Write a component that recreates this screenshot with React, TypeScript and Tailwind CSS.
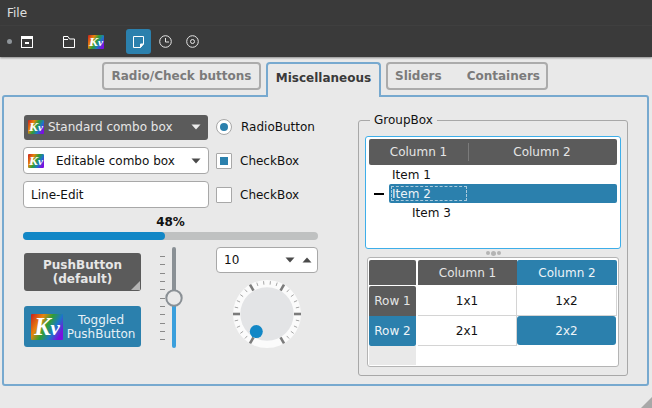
import React from "react";

function Kv({ w, h, cls = "" }: { w: number; h: number; cls?: string }) {
  return (
    <span
      className={`inline-flex items-baseline justify-center shrink-0 rounded-[1px] bg-[linear-gradient(120deg,#c81e1e_0%,#e8840c_28%,#2f9e35_48%,#1a78c8_68%,#7a0fe0_88%)] font-['Liberation_Serif',serif] italic font-bold text-white ${cls}`}
      style={{ width: w, height: h, fontSize: h * 0.95, lineHeight: `${h}px` }}
    >
      K<span style={{ fontSize: h * 0.8 }}>v</span>
    </span>
  );
}

function Caret({ up = false, cls = "fill-[#4a4a4a]" }: { up?: boolean; cls?: string }) {
  return (
    <svg width="10" height="6" viewBox="0 0 10 6" className={cls}>
      <path d={up ? "M5 0.5 L9.5 5.5 L0.5 5.5 Z" : "M0.5 0.5 L9.5 0.5 L5 5.5 Z"} />
    </svg>
  );
}

function Toolbar() {
  return (
    <div className="flex h-[31px] items-center bg-[#3a3a3a] pl-[7px] shadow-[0_1px_2px_#8a8a8a]">
      <span className="h-[5px] w-[5px] rounded-full bg-[#8f959a]" />
      <svg width="12" height="12" viewBox="0 0 12 12" className="ml-[9px] text-white" fill="none" stroke="currentColor">
        <rect x="0.5" y="0.5" width="11" height="11" />
        <rect x="0" y="0" width="12" height="3" fill="currentColor" stroke="none" />
        <rect x="4" y="6" width="4" height="2" fill="currentColor" stroke="none" />
      </svg>
      <svg width="12" height="12" viewBox="0 0 12 12" className="ml-[30px] text-white" fill="none" stroke="currentColor">
        <path d="M0.5 11.5 V0.5 H5 L6.5 3 H11.5 V11.5 Z M0.5 3.5 H5" />
      </svg>
      <Kv w={16} h={14} cls="ml-[13px]" />
      <div className="ml-[22px] flex h-[25px] w-[25px] items-center justify-center rounded-[3px] bg-[#2b80ad]">
        <svg width="11" height="12" viewBox="0 0 11 12" className="text-white" fill="none" stroke="currentColor">
          <path d="M0.5 0.5 H10.5 V8 L7.5 11.5 H0.5 Z" />
          <path d="M10.5 8 H7.5 V11.5" fill="currentColor" />
        </svg>
      </div>
      <svg width="13" height="13" viewBox="0 0 13 13" className="ml-[8px] text-[#e6e6e6]" fill="none" stroke="currentColor">
        <circle cx="6.5" cy="6.5" r="5.8" />
        <path d="M6.5 3 V7 H10" />
      </svg>
      <svg width="13" height="13" viewBox="0 0 13 13" className="ml-[14px] text-[#e6e6e6]" fill="none" stroke="currentColor">
        <circle cx="6.5" cy="6.5" r="5.8" />
        <circle cx="6.5" cy="6.5" r="2" />
      </svg>
    </div>
  );
}

function Tabs() {
  const idle = "flex h-[28px] items-center rounded-[4px] border-2 border-[#ababab] font-bold text-[#7b7b7b]";
  return (
    <div className="relative z-10 -mb-[2px] flex h-[40px] pl-[102px] pt-[5px]">
      <div className={`${idle} w-[159px] justify-center`}>Radio/Check buttons</div>
      <div className="ml-[5px] flex h-[35px] w-[115px] items-center justify-center rounded-t-[4px] border-2 border-b-0 border-[#77a9cf] bg-[#e9e9e9] pb-[6px] font-bold text-[#3a3a3a]">
        Miscellaneous
      </div>
      <div className={`${idle} ml-[5px] w-[162px] gap-[25px] pl-[7px]`}>
        <span>Sliders</span>
        <span>Containers</span>
      </div>
    </div>
  );
}

function LeftColumn() {
  const box = "h-[27px] w-[186px] rounded-[4px] border border-[#a8a8a8] bg-white";
  const check = "h-[16px] w-[16px] border border-[#a8a8a8] bg-white rounded-[1px]";
  return (
    <div className="flex w-[296px] flex-col pt-[16px]">
      <div className="flex h-[27px] items-center">
        <div className="ml-[1px] mt-[1px] flex h-[25px] w-[184px] items-center rounded-[3px] bg-[#5b5b5b] pl-[4px] pr-[7px] text-[#e6e6e6]">
          <Kv w={16} h={14} />
          <span className="ml-[4px] flex-1">Standard combo box</span>
          <Caret cls="fill-[#ececec]" />
        </div>
        <span className="ml-[8px] flex h-[16px] w-[16px] items-center justify-center rounded-full border border-[#a8a8a8] bg-white">
          <span className="h-[8px] w-[8px] rounded-full bg-[#2b80ad]" />
        </span>
        <span className="ml-[9px]">RadioButton</span>
      </div>
      <div className="mt-[7px] flex h-[27px] items-center">
        <div className={`${box} flex items-center pl-[4px] pr-[7px]`}>
          <Kv w={16} h={14} />
          <span className="ml-[12px] flex-1">Editable combo box</span>
          <Caret />
        </div>
        <span className={`${check} ml-[7px] flex items-center justify-center`}>
          <span className="h-[8px] w-[8px] bg-[#2b80ad]" />
        </span>
        <span className="ml-[8px]">CheckBox</span>
      </div>
      <div className="mt-[7px] flex h-[27px] items-center">
        <div className={`${box} flex items-center pl-[7px]`}>Line-Edit</div>
        <span className={`${check} ml-[7px]`} />
        <span className="ml-[8px]">CheckBox</span>
      </div>
      <div className="mt-[5px] flex h-[18px] items-center justify-center pr-[1px] font-bold">48%</div>
      <div className="mt-[1px] h-[8px] w-[295px] rounded-full bg-[#bfc1c1]">
        <div className="h-full rounded-full bg-[#1287c6]" style={{ width: "48%" }} />
      </div>
      <div className="mt-[7px] flex">
        <div className="flex w-[118px] flex-col pl-[1px] pt-[6px]">
          <div className="relative flex h-[38px] w-[117px] flex-col items-center justify-center rounded-[3px] bg-[#5b5b5b] text-center font-bold leading-[14px] text-[#e6e6e6]">
            <span>PushButton</span>
            <span>(default)</span>
            <svg width="9" height="9" viewBox="0 0 9 9" className="absolute bottom-[1px] right-[1px] fill-[#b4b4b4]">
              <path d="M9 0 V9 H0 Z" />
            </svg>
          </div>
          <div className="mt-[15px] flex h-[41px] w-[117px] items-center rounded-[3px] bg-[#2b80ad] pl-[7px] pr-[2px] text-[#e6f0f6]">
            <Kv w={32} h={26} />
            <span className="flex-1 text-center leading-[14px]">
              Toggled
              <br />
              PushButton
            </span>
          </div>
        </div>
        <div className="ml-[19px] w-[24px]">
          <VSlider />
        </div>
        <div className="ml-[32px] flex w-[102px] flex-col">
          <div className="flex h-[26px] items-center rounded-[4px] border border-[#a8a8a8] bg-white pl-[7px] pr-[5px]">
            <span className="flex-1">10</span>
            <Caret />
            <span className="ml-[7px]">
              <Caret up />
            </span>
          </div>
          <div className="flex justify-center pt-[5px]">
            <Dial />
          </div>
        </div>
      </div>
    </div>
  );
}

function VSlider() {
  const ticks = Array.from({ length: 11 }, (_, i) => 9 + i * 8.33);
  return (
    <svg width="24" height="102" viewBox="0 0 24 102" className="block">
      {ticks.map((y) => (
        <rect key={y} x="0" y={Math.round(y)} width="5" height="1" fill="#8a8a8a" />
      ))}
      <rect x="12" y="0" width="4" height="52" rx="2" fill="#8a9095" />
      <rect x="12" y="51" width="4" height="50" rx="2" fill="#3a9fdc" />
      <circle cx="14" cy="51" r="7.7" fill="#e9e9e9" stroke="#8a9095" strokeWidth="2" />
    </svg>
  );
}

function Dial() {
  const c = 36;
  const ticks = Array.from({ length: 26 }, (_, i) => i);
  return (
    <svg width="72" height="72" viewBox="0 0 72 72" className="shrink-0">
      <circle cx={c} cy={c} r="34" fill="#fbfbfb" />
      <circle cx={c} cy={c} r="26.7" fill="#e3e4e6" />
      {ticks.map((i) => {
        const a = ((120 + i * 12) * Math.PI) / 180;
        const major = i % 5 === 0;
        const r1 = major ? 27 : 29.5;
        const r2 = major ? 34 : 33;
        return (
          <line
            key={i}
            x1={c + Math.cos(a) * r1}
            y1={c + Math.sin(a) * r1}
            x2={c + Math.cos(a) * r2}
            y2={c + Math.sin(a) * r2}
            stroke={major ? "#7c7c7c" : "#8f8f8f"}
            strokeWidth={major ? 2.6 : 0.8}
          />
        );
      })}
      <circle cx="25.3" cy="53.6" r="6.5" fill="#1287c6" />
    </svg>
  );
}

function Tree() {
  return (
    <div className="flex h-[113px] w-[256px] flex-col rounded-[3px] border border-[#3daee9] bg-white px-[3px] pt-[2px]">
      <div className="flex h-[26px] items-center rounded-[2px] bg-[#5b5b5b] text-[#e6e6e6]">
        <span className="w-[99px] text-center">Column 1</span>
        <span className="h-[18px] w-px bg-[#7b7b7b]" />
        <span className="flex-1 pr-[2px] text-center">Column 2</span>
      </div>
      <div className="flex h-[19px] items-center pl-[23px]">Item 1</div>
      <div className="flex h-[19px] items-center">
        <span className="ml-[5px] h-[2px] w-[10px] bg-black" />
        <div className="ml-[5px] flex h-[19px] flex-1 items-center rounded-[2px] bg-[#2b80ad] pl-[2px] text-[#eef4f8]">
          <span className="flex h-[15px] w-[76px] items-center border border-dashed border-[#a9c9dc]">Item 2</span>
        </div>
      </div>
      <div className="flex h-[19px] items-center pl-[43px]">Item 3</div>
    </div>
  );
}

function Table() {
  const h = "flex items-center justify-center";
  const cell = `${h} h-[30px] border-r border-b border-[#d4d4d4]`;
  return (
    <div className="ml-[2px] h-[110px] w-[252px] rounded-[3px] border border-[#b4b4b4] bg-white px-[1px] pt-[2px]">
      <div className="grid grid-cols-[49px_99px_100px] grid-rows-[26px_30px_30px_19px]">
        <div className="mr-[2px] mb-[1px] rounded-t-[2px] bg-[#5b5b5b]" />
        <div className={`${h} mb-[1px] rounded-tl-[2px] bg-[#5b5b5b] text-[#e6e6e6]`}>Column 1</div>
        <div className={`${h} mb-[1px] rounded-t-[2px] bg-[#2b80ad] text-[#eef4f8]`}>Column 2</div>
        <div className={`${h} mr-[2px] rounded-t-[2px] bg-[#5b5b5b] text-[#e6e6e6]`}>Row 1</div>
        <div className={cell}>1x1</div>
        <div className={cell}>1x2</div>
        <div className={`${h} mr-[2px] rounded-b-[2px] bg-[#2b80ad] text-[#eef4f8]`}>Row 2</div>
        <div className={cell}>2x1</div>
        <div className={`${h} mb-px mr-px rounded-[3px] bg-[#2b80ad] text-[#eef4f8]`}>2x2</div>
        <div className="mr-[2px] bg-[#e9e9e9]" />
      </div>
    </div>
  );
}

function GroupBox() {
  return (
    <div className="relative mt-[23px] ml-[39px] flex h-[256px] w-[270px] flex-col items-start rounded-[3px] border border-[#a8a8a8] px-[6px] pt-[15px]">
      <span className="absolute -top-[9px] left-[11px] bg-[#e9e9e9] px-[4px] leading-[17px]">GroupBox</span>
      <Tree />
      <div className="flex h-[8px] w-[256px] items-center justify-center gap-[1px]">
        <span className="h-[4px] w-[4px] rounded-full bg-[#b4b4b4]" />
        <span className="h-[5px] w-[5px] rounded-full bg-[#b4b4b4]" />
        <span className="h-[4px] w-[4px] rounded-full bg-[#b4b4b4]" />
      </div>
      <Table />
    </div>
  );
}

export default function App() {
  return (
    <div className="relative h-[408px] w-[652px] overflow-hidden bg-[#e9e9e9] font-['DejaVu_Sans',sans-serif] text-[12px] text-[#111]">
      <div className="flex h-[26px] items-center bg-[#3a3a3a] pl-[7px] text-[#e0e0e0]">File</div>
      <Toolbar />
      <Tabs />
      <div className="ml-[2px] flex h-[291px] w-[647px] rounded-[3px] border-2 border-[#77a9cf] pl-[19px]">
        <LeftColumn />
        <GroupBox />
      </div>
      <svg width="11" height="11" viewBox="0 0 11 11" className="absolute bottom-0 right-0 fill-[#a8a8a8]">
        <path d="M11 0 V11 H0 Z" />
      </svg>
    </div>
  );
}
